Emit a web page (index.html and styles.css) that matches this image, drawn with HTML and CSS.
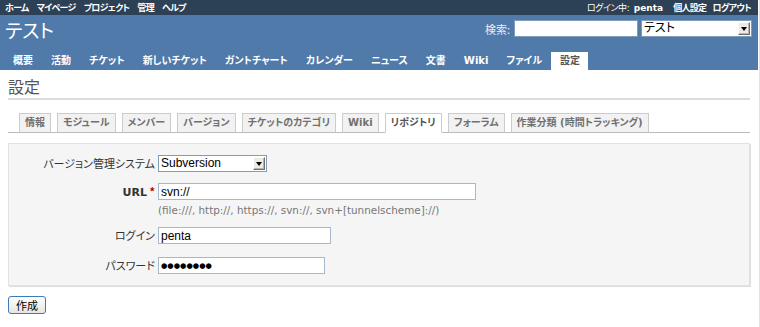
FILE: index.html
```html
<!DOCTYPE html>
<html lang="ja">
<head>
<meta charset="utf-8">
<title>設定 - テスト</title>
<link rel="stylesheet" href="styles.css">
</head>
<body>
<div class="page">
  <div class="top-menu">
    <ul class="tm-left">
      <li><a href="#">ホーム</a></li>
      <li><a href="#">マイページ</a></li>
      <li><a href="#">プロジェクト</a></li>
      <li><a href="#">管理</a></li>
      <li><a href="#">ヘルプ</a></li>
    </ul>
    <div class="tm-right">
      <span class="loggedas">ログイン中: <b>penta</b></span>
      <a href="#">個人設定</a>
      <a href="#">ログアウト</a>
    </div>
  </div>
  <div class="header">
    <div class="header-row">
      <h1>テスト</h1>
      <div class="search">
        <span class="search-label">検索:</span>
        <input class="search-input" type="text" value="">
        <div class="select select-project"><span class="select-text">テスト</span><span class="arrow"></span></div>
      </div>
    </div>
    <ul class="main-menu">
      <li><a href="#">概要</a></li>
      <li><a href="#">活動</a></li>
      <li><a href="#">チケット</a></li>
      <li><a href="#">新しいチケット</a></li>
      <li><a href="#">ガントチャート</a></li>
      <li><a href="#">カレンダー</a></li>
      <li><a href="#">ニュース</a></li>
      <li><a href="#">文書</a></li>
      <li><a href="#">Wiki</a></li>
      <li><a href="#">ファイル</a></li>
      <li><a href="#" class="selected">設定</a></li>
    </ul>
  </div>
  <div class="content">
    <h2>設定</h2>
    <ul class="tabs">
      <li><a href="#">情報</a></li>
      <li><a href="#">モジュール</a></li>
      <li><a href="#">メンバー</a></li>
      <li><a href="#">バージョン</a></li>
      <li><a href="#">チケットのカテゴリ</a></li>
      <li><a href="#">Wiki</a></li>
      <li><a href="#" class="selected">リポジトリ</a></li>
      <li><a href="#">フォーラム</a></li>
      <li><a href="#">作業分類 (時間トラッキング)</a></li>
    </ul>
    <div class="box">
      <div class="row row-scm">
        <label class="label">バージョン管理システム</label>
        <div class="select select-scm"><span class="select-text">Subversion</span><span class="arrow"></span></div>
      </div>
      <div class="row row-url">
        <label class="label"><b>URL</b> <span class="required">*</span></label>
        <div class="field">
          <input class="input input-url" type="text" value="svn://">
          <div class="hint">(file:///, http://, https://, svn://, svn+[tunnelscheme]://)</div>
        </div>
      </div>
      <div class="row row-login">
        <label class="label">ログイン</label>
        <input class="input input-login" type="text" value="penta">
      </div>
      <div class="row row-pass">
        <label class="label">パスワード</label>
        <div class="input input-pass"><span class="dots">●●●●●●●●</span></div>
      </div>
    </div>
    <button class="btn" type="button">作成</button>
  </div>
</div>
</body>
</html>
```

FILE: styles.css
```css
* { box-sizing: border-box; }
html, body { margin: 0; padding: 0; background: #fff; }
body {
  font-family: "DejaVu Sans", "Noto Sans CJK JP", sans-serif;
  font-size: 12px;
  color: #484848;
  font-feature-settings: "palt";
}
ul { list-style: none; margin: 0; padding: 0; }
a { text-decoration: none; }

.page {
  width: 758px;
  min-height: 327px;
  box-shadow: 1px 0 0 #fff, 2px 0 0 #e2e2e2;
}

/* top menu */
.top-menu {
  height: 15px;
  background: #2c4056;
  color: #fff;
  font-size: 9px;
  font-weight: bold;
  letter-spacing: -0.7px;
  display: flex;
  justify-content: space-between;
  align-items: center;
  padding: 0 7px 0 5px;
}
.tm-left { display: flex; gap: 8px; }
.tm-left a, .tm-right a { color: #fff; }
.tm-right { display: flex; gap: 6px; align-items: center; }
.loggedas { font-weight: normal; margin-right: 4px; letter-spacing: -0.4px; }
.loggedas b { font-weight: bold; margin-left: 2px; letter-spacing: 0; }

/* header */
.header {
  background: #507aaa;
  color: #f8f8f8;
  height: 55px;
  display: flex;
  flex-direction: column;
  justify-content: space-between;
}
.header-row {
  display: flex;
  justify-content: space-between;
  align-items: flex-start;
  padding: 3px 6px 0 5px;
}
.header h1 {
  margin: 0;
  font-size: 19px;
  line-height: 24px;
  font-weight: normal;
  font-family: "Noto Sans CJK JP", sans-serif;
  color: #fff;
}
.search {
  display: flex;
  align-items: center;
  margin-top: 2px;
}
.search-label {
  font-family: "Noto Sans CJK JP", sans-serif;
  font-size: 11px;
  color: #e8edf4;
  margin-right: 4px;
}
.search-input {
  width: 124px;
  height: 17px;
  border: 1px solid #7f9db9;
  background: #fff;
  margin: 0 3px 0 0;
  padding: 0;
}

.select {
  display: flex;
  align-items: center;
  height: 17px;
  border: 1px solid #7f9db9;
  background: #fff;
  font-family: "Liberation Sans", "Noto Sans CJK JP", sans-serif;
  font-size: 12px;
  color: #000;
  padding: 0 1px 0 2px;
}
.select-text { flex: 1; line-height: 15px; }
.select-project { width: 111px; }
.arrow {
  width: 12px;
  height: 13px;
  background: #ecebe6;
  border: 1px solid;
  border-color: #fff #6f6f6f #6f6f6f #fff;
  box-shadow: inset -1px -1px 0 #b5b5b5;
  position: relative;
}
.arrow::after {
  content: "";
  position: absolute;
  left: 2px;
  top: 4px;
  border-left: 3.5px solid transparent;
  border-right: 3.5px solid transparent;
  border-top: 4px solid #000;
}

.main-menu {
  display: flex;
  padding-left: 4px;
  height: 18px;
}
.main-menu a {
  display: block;
  padding: 0 9px;
  height: 18px;
  line-height: 18px;
  color: #fff;
  font-size: 10px;
  font-weight: bold;
}
.main-menu a.selected {
  background: #fff;
  color: #555;
  padding: 0 8px 0 9px;
}

/* content */
.content { padding: 0 8px; }
.content h2 {
  margin: 6px 0 0 0;
  padding: 0 0 1px 0;
  font-size: 16px;
  line-height: 21px;
  font-weight: normal;
  color: #555;
  font-family: "Noto Sans CJK JP", sans-serif;
  border-bottom: 2px solid #dcdcdc;
}

.tabs {
  display: flex;
  gap: 6px;
  margin-top: 13px;
  padding-left: 11px;
  border-bottom: 1px solid #bbb;
  height: 20px;
}
.tabs li { height: 20px; }
.tabs a {
  display: block;
  height: 20px;
  line-height: 17px;
  padding: 0 5px;
  background: #f2f2f2;
  border: 1px solid #ccc;
  border-bottom: 1px solid #bbb;
  color: #707070;
  font-size: 10px;
  font-weight: bold;
}
.tabs a.selected {
  background: #fff;
  border-bottom-color: #fff;
  color: #555;
}

.box {
  margin-top: 10px;
  background: #f5f5f5;
  border: 1px solid #e2e2e2;
  box-shadow: 1px 1px 0 #ddd;
  padding: 11px 0 11px 0;
  height: 143px;
}
.row { display: flex; align-items: flex-start; }
.label {
  width: 146px;
  margin-right: 3px;
  text-align: right;
  line-height: 17px;
  font-size: 11px;
  color: #333;
  font-family: "Noto Sans CJK JP", sans-serif;
}
.label b { font-family: "DejaVu Sans", sans-serif; font-size: 11px; }
.required { color: #bb0000; font-weight: bold; }
.row-url { margin-top: 11px; }
.row-login { margin-top: 10px; }
.row-pass { margin-top: 13px; }

.select-scm { width: 109px; height: 17px; }

.input {
  display: block;
  height: 17px;
  border: 1px solid #a5b8cc;
  background: #fff;
  margin: 0;
  padding: 0 2px;
  font-family: "Liberation Sans", sans-serif;
  font-size: 12px;
  color: #000;
}
.input-url { width: 318px; }
.input-login { width: 173px; }
.input-pass { width: 167px; display: flex; align-items: center; }
.dots {
  font-family: "DejaVu Sans", sans-serif;
  font-size: 7.3px;
  letter-spacing: 0;
  line-height: 1;
  color: #000;
}
.hint {
  margin-top: 4px;
  font-size: 10.4px;
  line-height: 13px;
  color: #777;
  font-family: "DejaVu Sans", sans-serif;
}

.btn {
  display: block;
  margin-top: 10px;
  width: 38px;
  height: 18px;
  padding: 0;
  border: 1px solid #3b7bbd;
  border-radius: 3px;
  background: linear-gradient(#fdfdfd, #e6e6e2);
  font-family: "Noto Sans CJK JP", sans-serif;
  font-size: 11px;
  color: #000;
}
```
